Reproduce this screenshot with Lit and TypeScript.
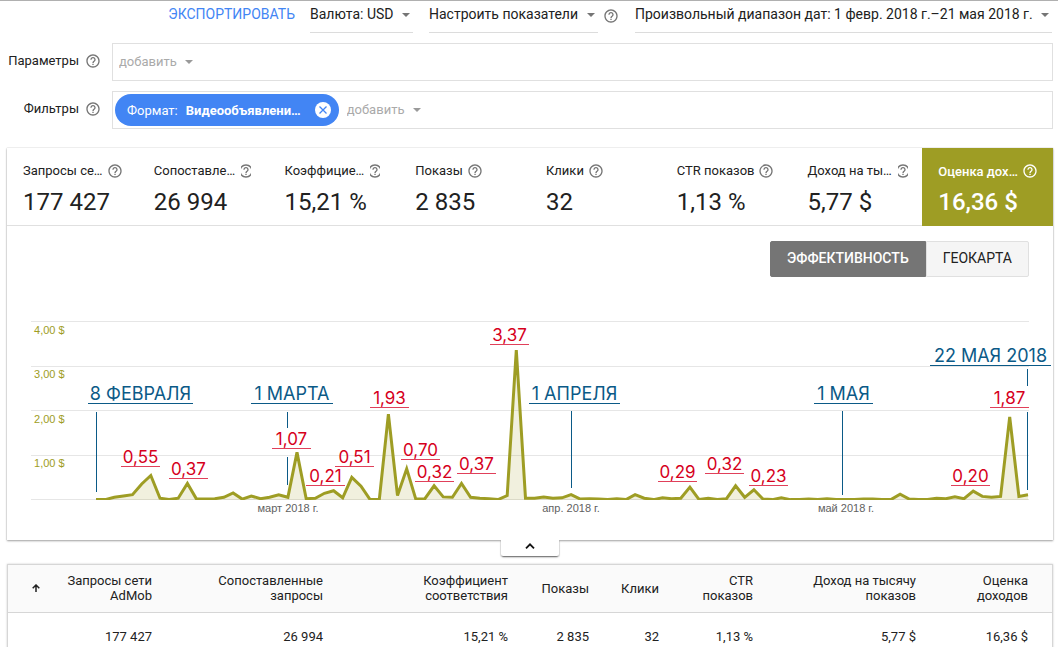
import { LitElement, html, svg, css } from "lit";
import { customElement, property, state } from "lit/decorators.js";
import { classMap } from "lit/directives/class-map.js";

interface Metric {
  title: string;
  value: string;
  narrowIcon?: boolean;
}

interface Mark {
  text: string;
  x1: number;
  x2: number;
  y: number;
}

const METRICS: Metric[] = [
  { title: "Запросы се…", value: "177 427" },
  { title: "Сопоставле…", value: "26 994", narrowIcon: true },
  { title: "Коэффицие…", value: "15,21 %", narrowIcon: true },
  { title: "Показы", value: "2 835" },
  { title: "Клики", value: "32" },
  { title: "CTR показов", value: "1,13 %" },
  { title: "Доход на ты…", value: "5,77 $", narrowIcon: true },
  { title: "Оценка дох…", value: "16,36 $" },
];

const COLUMNS = [
  { lines: ["Запросы сети", "AdMob"], value: "177 427", width: 117 },
  { lines: ["Сопоставленные", "запросы"], value: "26 994", width: 171 },
  { lines: ["Коэффициент", "соответствия"], value: "15,21 %", width: 185 },
  { lines: ["Показы"], value: "2 835", width: 81 },
  { lines: ["Клики"], value: "32", width: 70 },
  { lines: ["CTR", "показов"], value: "1,13 %", width: 94 },
  { lines: ["Доход на тысячу", "показов"], value: "5,77 $", width: 163 },
  { lines: ["Оценка", "доходов"], value: "16,36 $", width: 124 },
];

// Daily revenue in cents, starting on 8 February 2018.
const DAILY = [
  1, 1, 6, 9, 12, 36, 55, 4, 1, 4, 37, 2, 2, 3, 6, 16, 2, 9, 3, 6, 12, 6, 107, 3, 4, 15, 21, 5, 51,
  31, 1, 1, 193, 10, 70, 2, 3, 32, 7, 6, 37, 6, 4, 3, 1, 10, 337, 4, 4, 7, 4, 5, 12, 2, 3, 2, 1, 3,
  1, 12, 4, 1, 5, 3, 4, 29, 1, 4, 1, 3, 32, 6, 23, 2, 1, 5, 1, 1, 2, 1, 3, 1, 1, 1, 2, 2, 1, 1, 13,
  2, 1, 1, 4, 3, 7, 3, 20, 8, 6, 8, 187, 8, 12,
];

const PLOT = { left: 89, right: 1021, base: 211, dollar: 44.5 };

const DATES: Mark[] = [
  { text: "8 ФЕВРАЛЯ", x1: 81, x2: 186, y: 111 },
  { text: "1 МАРТА", x1: 244, x2: 326, y: 111 },
  { text: "1 АПРЕЛЯ", x1: 522, x2: 613, y: 111 },
  { text: "1 МАЯ", x1: 807, x2: 866, y: 111 },
  { text: "22 МАЯ 2018", x1: 923, x2: 1044, y: 73 },
];

const PEAKS: Mark[] = [
  { text: "0,55", x1: 114, x2: 153, y: 174 },
  { text: "0,37", x1: 162, x2: 201, y: 186 },
  { text: "1,07", x1: 265, x2: 304, y: 156 },
  { text: "0,21", x1: 299, x2: 338, y: 193 },
  { text: "0,51", x1: 328, x2: 367, y: 174 },
  { text: "1,93", x1: 363, x2: 402, y: 115 },
  { text: "0,70", x1: 394, x2: 433, y: 167 },
  { text: "0,32", x1: 408, x2: 447, y: 189 },
  { text: "0,37", x1: 450, x2: 489, y: 181 },
  { text: "3,37", x1: 483, x2: 522, y: 52 },
  { text: "0,29", x1: 651, x2: 690, y: 189 },
  { text: "0,32", x1: 698, x2: 737, y: 181 },
  { text: "0,23", x1: 742, x2: 781, y: 193 },
  { text: "0,20", x1: 944, x2: 983, y: 193 },
  { text: "1,87", x1: 983, x2: 1022, y: 115 },
];

// Vertical pointers from a date caption to the axis: x, top, bottom.
const POINTERS = [
  [89, 123, 203],
  [280, 123, 139],
  [280, 168, 196],
  [564, 122, 199],
  [835, 122, 206],
  [1020, 80, 97],
  [1020, 123, 201],
];

const helpIcon = () => html`
  <svg class="help" viewBox="0 0 24 24" aria-hidden="true">
    <path
      fill="currentColor"
      d="M11 18h2v-2h-2v2zm1-16C6.480 2 2 6.480 2 12s4.480 10 10 10 10-4.480 10-10S17.520 2 12 2zm0 18c-4.410 0-8-3.590-8-8s3.590-8 8-8 8 3.590 8 8-3.590 8-8 8zm0-14c-2.210 0-4 1.790-4 4h2c0-1.100.9-2 2-2s2 .9 2 2c0 2-3 1.750-3 5h2c0-2.250 3-2.500 3-5 0-2.210-1.790-4-4-4z"
    />
  </svg>
`;

@customElement("drop-down")
class DropDown extends LitElement {
  @property() label = "";
  @property() text = "";
  @property({ type: Boolean }) muted = false;

  static styles = css`
    :host {
      display: block;
    }
    .field {
      display: grid;
      grid-template-columns: 1fr auto;
      align-items: center;
      height: 31px;
      color: #212121;
      border-bottom: 1px solid #dcdcdc;
    }
    .muted {
      color: #aaa;
      border-bottom: 0;
      height: 24px;
    }
    select {
      grid-area: 1 / 1 / 2 / 3;
      appearance: none;
      width: 100%;
      margin: 0;
      padding: 0 19px 0 0;
      border: 0;
      background: none;
      color: inherit;
      font: 14px/20px Roboto, sans-serif;
      cursor: pointer;
    }
    .field:not(.muted) select {
      padding-bottom: 5px;
    }
    .muted select {
      font-size: 13px;
    }
    .arrow {
      grid-area: 1 / 2;
      width: 8px;
      height: 4px;
      margin-right: 3px;
      pointer-events: none;
      fill: #757575;
    }
    .field:not(.muted) .arrow {
      margin-bottom: 3px;
    }
    .muted .arrow {
      fill: #9a9a9a;
    }
  `;

  render() {
    return html`
      <div class=${classMap({ field: true, muted: this.muted })}>
        <select aria-label=${this.label}>
          <option>${this.text}</option>
        </select>
        <svg class="arrow" viewBox="0 0 8 4" aria-hidden="true"><path d="M0 0h8L4 4z" /></svg>
      </div>
    `;
  }
}

@customElement("revenue-chart")
class RevenueChart extends LitElement {
  static styles = css`
    :host {
      display: block;
    }
    .chart {
      display: block;
      width: 100%;
      height: auto;
      overflow: visible;
    }
    .grid {
      stroke: #e6e6e6;
      shape-rendering: crispEdges;
    }
    .area {
      fill: #9e9d24;
      fill-opacity: 0.15;
    }
    .line {
      fill: none;
      stroke: #9e9d24;
      stroke-width: 3;
    }
    .tick {
      font: 11px "Liberation Sans", sans-serif;
      fill: #9e9d24;
    }
    .month {
      font: 11px "Liberation Sans", sans-serif;
      fill: #616161;
      text-anchor: middle;
    }
    .mark {
      font: 17px Inter, sans-serif;
      text-anchor: middle;
    }
    .date {
      font-size: 18px;
      fill: #0b5a87;
    }
    .peak {
      fill: #d6001c;
    }
    .rule {
      shape-rendering: crispEdges;
    }
    .date-rule {
      stroke: #0b5a87;
    }
    .peak-rule {
      stroke: #e0405a;
    }
  `;

  private mark(m: Mark, kind: string) {
    return svg`
      <text class="mark ${kind}" x=${(m.x1 + m.x2) / 2} y=${m.y}>${m.text}</text>
      <path class="rule ${kind}-rule" d="M${m.x1} ${m.y + 3.5}H${m.x2}" />
    `;
  }

  render() {
    const step = (PLOT.right - PLOT.left) / (DAILY.length - 1);
    const points = DAILY.map(
      (cents, i) =>
        `${(PLOT.left + i * step).toFixed(1)} ${(PLOT.base - (cents / 100) * PLOT.dollar).toFixed(1)}`
    ).join("L");
    return html`
      <svg class="chart" viewBox="0 0 1046 240" role="img" aria-label="Оценка доходов">
        <defs>
          <clipPath id="plot"><rect x="24" y="20" width="998" height="191" /></clipPath>
        </defs>
        ${[4, 3, 2, 1, 0].map((n) => svg`
          <path class="grid" d="M24 ${Math.floor(210.5 - n * PLOT.dollar) + 0.5}H1022" />
          ${n ? svg`<text class="tick" x="27" y=${223 - Math.round(n * PLOT.dollar)}>${n},00 $</text>` : ""}
        `)}
        <g clip-path="url(#plot)">
          <path class="area" d="M${PLOT.left} ${PLOT.base}L${points}V${PLOT.base}Z" />
          <path class="line" d="M${points}" />
        </g>
        <text class="month" x="281" y="223">март 2018 г.</text>
        <text class="month" x="564" y="223">апр. 2018 г.</text>
        <text class="month" x="839" y="223">май 2018 г.</text>
        ${POINTERS.map(([x, top, bottom]) => svg`
          <path class="rule date-rule" d="M${x + 0.5} ${top}V${bottom}" />
        `)}
        ${DATES.map((m) => this.mark(m, "date"))} ${PEAKS.map((m) => this.mark(m, "peak"))}
      </svg>
    `;
  }
}

@customElement("app-root")
class AppRoot extends LitElement {
  @state() private view = "chart";
  @state() private selected = 7;

  static styles = css`
    :host {
      display: block;
      box-sizing: border-box;
      min-height: 100vh;
      overflow: hidden;
      background: #fff;
      color: #212121;
      font: 13px/15px Roboto, sans-serif;
      border-top: 1px solid #b0b0b0;
    }
    * {
      box-sizing: border-box;
    }
    button {
      margin: 0;
      padding: 0;
      border: 0;
      background: none;
      color: inherit;
      font: inherit;
      text-align: left;
      cursor: pointer;
    }
    .help {
      display: block;
      flex: none;
      width: 16px;
      height: 16px;
      color: #757575;
    }
    .toolbar {
      display: flex;
      justify-content: flex-end;
      align-items: flex-start;
      height: 32px;
      padding-right: 6px;
    }
    .export {
      margin-right: 15px;
      color: #4285f4;
      font-size: 14px;
      line-height: 27px;
    }
    .currency {
      margin-right: 16px;
    }
    .metrics-help {
      margin: 7px 16px 0 5px;
    }
    .filters {
      display: grid;
      grid-template-columns: 94px 1fr;
      column-gap: 11px;
      row-gap: 10px;
      padding: 10px 5px 0 7px;
    }
    .filter-name {
      display: flex;
      justify-content: flex-end;
      align-items: center;
      gap: 6px;
      height: 35px;
    }
    .box {
      display: flex;
      align-items: center;
      gap: 8px;
      height: 38px;
      padding: 0 2px;
      border: 1px solid #e0e0e0;
    }
    .box.empty {
      padding-left: 6px;
    }
    .chip {
      display: flex;
      align-items: center;
      height: 32px;
      padding: 0 8px 0 12px;
      border-radius: 16px;
      background: #4285f4;
      color: #fff;
    }
    .chip b {
      margin: 0 14px 0 8px;
      font-weight: 700;
    }
    .remove svg {
      display: block;
      width: 16px;
      height: 16px;
    }
    .card {
      margin: 19px 5px 0 7px;
      background: #fff;
      box-shadow: 0 1px 2px rgba(0, 0, 0, 0.35), 0 0 1px rgba(0, 0, 0, 0.25);
    }
    .metrics {
      display: grid;
      grid-template-columns: repeat(8, minmax(0, 1fr));
      border-bottom: 1px solid #e0e0e0;
    }
    .metric {
      height: 77px;
      padding: 5px 8px 0 16px;
      white-space: nowrap;
    }
    .metric.selected {
      height: 78px;
      margin-bottom: -1px;
      background: #9e9d24;
      color: #fff;
    }
    .metric-title {
      display: flex;
      align-items: center;
      gap: 4px;
      height: 16px;
    }
    .metric-icon {
      display: flex;
      justify-content: center;
    }
    .narrow {
      width: 10px;
      margin-left: 2px;
      overflow: hidden;
    }
    .metric-value {
      display: block;
      margin-top: 9px;
      font-size: 24px;
      line-height: 28px;
    }
    .selected .help {
      color: #fff;
    }
    .selected .metric-title,
    .selected .metric-value {
      font-weight: 500;
    }
    .views {
      display: flex;
      justify-content: flex-end;
      padding: 15px 24px 12px;
    }
    .view {
      height: 36px;
      padding: 0 16px 2px;
      border: 1px solid #e0e0e0;
      border-radius: 0 2px 2px 0;
      background: #f5f5f5;
      font-size: 14px;
    }
    .view:first-child {
      border-radius: 2px 0 0 2px;
    }
    .view.active {
      border-color: #757575;
      background: #757575;
      color: #fff;
      font-weight: 500;
    }
    .chart-body {
      padding-bottom: 11px;
    }
    .collapse {
      display: grid;
      place-items: center;
      position: relative;
      width: 58px;
      height: 16px;
      margin: 0 auto;
      background: #fff;
      border-radius: 0 0 2px 2px;
      box-shadow: 0 2px 2px -1px rgba(0, 0, 0, 0.5), 1px 1px 1px rgba(0, 0, 0, 0.12),
        -1px 1px 1px rgba(0, 0, 0, 0.12);
    }
    .collapse-row {
      padding: 0 5px 0 7px;
    }
    .collapse svg {
      width: 10px;
      height: 6px;
      margin-bottom: 4px;
    }
    .table-card {
      margin: 8px 5px 0 7px;
      border: 1px solid #d6d6d6;
      box-shadow: 0 0 2px rgba(0, 0, 0, 0.2);
    }
    table {
      width: 100%;
      table-layout: fixed;
      border-collapse: collapse;
    }
    th,
    td {
      height: 48px;
      padding: 0 12px 0 0;
      text-align: right;
      font-weight: 400;
      white-space: nowrap;
    }
    th {
      height: 47px;
      background: #fafafa;
      border-bottom: 1px solid #d6d6d6;
    }
    th:last-child,
    td:last-child {
      padding-right: 24px;
    }
    th span {
      display: block;
    }
    .sort svg {
      display: block;
      width: 8px;
      height: 8px;
    }
    .sort {
      display: block;
      margin-left: auto;
    }
    th:first-child {
      padding-right: 7px;
    }
  `;

  private renderMetric(m: Metric, i: number) {
    return html`
      <button
        class=${classMap({ metric: true, selected: i === this.selected })}
        @click=${() => (this.selected = i)}
      >
        <span class="metric-title">
          ${m.title}
          <span class=${classMap({ "metric-icon": true, narrow: !!m.narrowIcon })}>${helpIcon()}</span>
        </span>
        <span class="metric-value">${m.value}</span>
      </button>
    `;
  }

  private renderView(id: string, title: string) {
    return html`
      <button
        class=${classMap({ view: true, active: this.view === id })}
        @click=${() => (this.view = id)}
      >${title}</button>
    `;
  }

  render() {
    return html`
      <header class="toolbar">
        <button class="export">ЭКСПОРТИРОВАТЬ</button>
        <drop-down class="currency" label="Валюта" text="Валюта: USD"></drop-down>
        <drop-down label="Показатели" text="Настроить показатели"></drop-down>
        <button class="metrics-help" aria-label="Справка">${helpIcon()}</button>
        <drop-down
          label="Диапазон дат"
          text="Произвольный диапазон дат: 1 февр. 2018 г.–21 мая 2018 г."
        ></drop-down>
      </header>

      <section class="filters">
        <div class="filter-name">Параметры ${helpIcon()}</div>
        <div class="box empty">
          <drop-down muted label="Параметры" text="добавить"></drop-down>
        </div>
        <div class="filter-name">Фильтры ${helpIcon()}</div>
        <div class="box">
          <span class="chip">
            Формат: <b>Видеообъявлени…</b>
            <button class="remove" aria-label="Удалить фильтр">
              <svg viewBox="0 0 16 16">
                <circle cx="8" cy="8" r="8" fill="#fff" />
                <path d="M4.500 4.500l7 7M11.500 4.500l-7 7" stroke="#4285f4" stroke-width="1.300" />
              </svg>
            </button>
          </span>
          <drop-down muted label="Фильтры" text="добавить"></drop-down>
        </div>
      </section>

      <section class="card">
        <div class="metrics">${METRICS.map((m, i) => this.renderMetric(m, i))}</div>
        <div class="views">
          ${this.renderView("chart", "ЭФФЕКТИВНОСТЬ")}${this.renderView("map", "ГЕОКАРТА")}
        </div>
        <div class="chart-body"><revenue-chart></revenue-chart></div>
      </section>
      <div class="collapse-row">
        <button class="collapse" aria-label="Свернуть график">
          <svg viewBox="0 0 10 6" aria-hidden="true">
            <path d="M1 5.300l4-4 4 4" fill="none" stroke="#111" stroke-width="1.800" />
          </svg>
        </button>
      </div>

      <section class="table-card">
        <table>
          <colgroup>
            <col style="width:39px" />
            ${COLUMNS.map((c) => html`<col style="width:${c.width}px" />`)}
          </colgroup>
          <thead>
            <tr>
              <th>
                <button class="sort" aria-label="Сортировать">
                  <svg viewBox="0 0 8 8" aria-hidden="true">
                    <path d="M4 8V1.500M.7 4.300L4 1l3.300 3.300" fill="none" stroke="#212121" stroke-width="1.500" />
                  </svg>
                </button>
              </th>
              ${COLUMNS.map((c) => html`<th scope="col">${c.lines.map((l) => html`<span>${l}</span>`)}</th>`)}
            </tr>
          </thead>
          <tbody>
            <tr>
              <td></td>
              ${COLUMNS.map((c) => html`<td>${c.value}</td>`)}
            </tr>
          </tbody>
        </table>
      </section>
    `;
  }
}
